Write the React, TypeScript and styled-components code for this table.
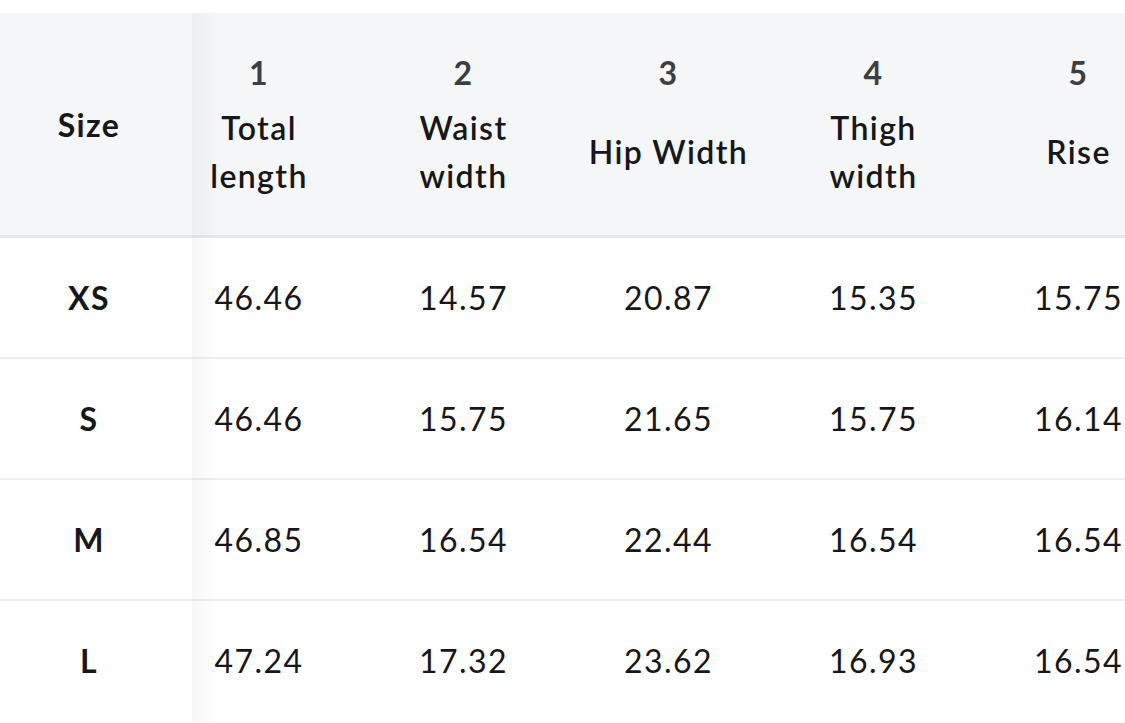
import React from "react";
import styled, { createGlobalStyle } from "styled-components";

const Global = createGlobalStyle`
  html, body { margin: 0; padding: 0; background: #ffffff; }
  body { font-family: "Lato", "Liberation Sans", sans-serif; color: #121417; }
`;

const Page = styled.div`
  width: 1125px;
  height: 723px;
  overflow: hidden;
  padding-top: 13px;
  box-sizing: border-box;
  background: #ffffff;
`;

const Table = styled.table`
  table-layout: fixed;
  border-collapse: collapse;
  width: 1181px;
  letter-spacing: 1.4px;
`;

const HeadRow = styled.tr`
  background: #f5f6f8;
  border-bottom: 3px solid #e6e8eb;
`;

const BodyRow = styled.tr`
  border-bottom: 2px solid #efefef;
  &:last-child { border-bottom: none; }
`;

const SizeHead = styled.th<{ $w: number }>`
  position: relative;
  box-sizing: border-box;
  width: ${(p) => p.$w}px;
  height: 222px;
  padding: 0 14px 0 0;
  font-size: 32px;
  font-weight: 700;
  color: #15171a;
  text-align: center;
  vertical-align: middle;
  &::after {
    content: "";
    position: absolute;
    top: 0;
    bottom: -3px;
    right: -28px;
    width: 28px;
    background: linear-gradient(to right, rgba(0, 0, 0, 0.035), rgba(0, 0, 0, 0));
  }
`;

const ColHead = styled.th<{ $w: number; $shift?: number }>`
  box-sizing: border-box;
  width: ${(p) => p.$w}px;
  padding: 0 ${(p) => p.$shift ?? 0}px 0 0;
  vertical-align: top;
  font-weight: 600;
`;

const HeadStack = styled.div`
  display: flex;
  flex-direction: column;
  align-items: center;
  height: 222px;
  padding: 36px 0 28px;
  box-sizing: border-box;
`;

const HeadNum = styled.div`
  font-size: 32px;
  line-height: 48px;
  font-weight: 700;
  color: #3b3e43;
`;

const HeadLabel = styled.div`
  flex: 1;
  display: flex;
  align-items: center;
  justify-content: center;
  text-align: center;
  font-size: 32px;
  line-height: 48px;
  color: #15171a;
`;

const SizeCell = styled.td`
  position: relative;
  height: 119px;
  padding: 0 14px 0 0;
  text-align: center;
  font-size: 32px;
  font-weight: 700;
  color: #15171a;
  &::after {
    content: "";
    position: absolute;
    top: 0;
    bottom: -2px;
    right: -28px;
    width: 28px;
    background: linear-gradient(to right, rgba(0, 0, 0, 0.03), rgba(0, 0, 0, 0));
  }
`;

const ValueCell = styled.td<{ $shift?: number }>`
  padding: 0 ${(p) => p.$shift ?? 0}px 0 0;
  text-align: center;
  font-size: 32px;
  font-weight: 400;
  color: #15171a;
`;

const columns = [
  { n: "1", label: ["Total", "length"], w: 169, shift: 35 },
  { n: "2", label: ["Waist", "width"], w: 205 },
  { n: "3", label: ["Hip Width"], w: 205 },
  { n: "4", label: ["Thigh", "width"], w: 205 },
  { n: "5", label: ["Rise"], w: 205 },
];

const rows = [
  { size: "XS", values: ["46.46", "14.57", "20.87", "15.35", "15.75"] },
  { size: "S", values: ["46.46", "15.75", "21.65", "15.75", "16.14"] },
  { size: "M", values: ["46.85", "16.54", "22.44", "16.54", "16.54"] },
  { size: "L", values: ["47.24", "17.32", "23.62", "16.93", "16.54"] },
];

export default function App() {
  return (
    <>
      <Global />
      <Page>
        <Table>
          <thead>
            <HeadRow>
              <SizeHead $w={192}>Size</SizeHead>
              {columns.map((c) => (
                <ColHead key={c.n} $w={c.w} $shift={c.shift}>
                  <HeadStack>
                    <HeadNum>{c.n}</HeadNum>
                    <HeadLabel>
                      <span>
                        {c.label.map((l, i) => (
                          <React.Fragment key={l}>
                            {i > 0 && <br />}
                            {l}
                          </React.Fragment>
                        ))}
                      </span>
                    </HeadLabel>
                  </HeadStack>
                </ColHead>
              ))}
            </HeadRow>
          </thead>
          <tbody>
            {rows.map((r) => (
              <BodyRow key={r.size}>
                <SizeCell>{r.size}</SizeCell>
                {r.values.map((v, i) => (
                  <ValueCell key={i} $shift={columns[i].shift}>
                    {v}
                  </ValueCell>
                ))}
              </BodyRow>
            ))}
          </tbody>
        </Table>
      </Page>
    </>
  );
}
